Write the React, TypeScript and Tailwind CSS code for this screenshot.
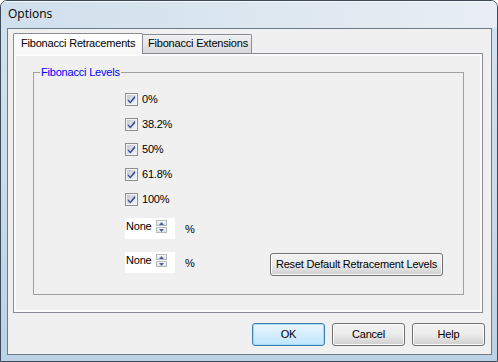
import React from 'react'

const body = { fontFamily: '"Liberation Sans", Arial, sans-serif' }

function Check() {
  return (
    <svg width="13" height="13" viewBox="0 0 13 13" className="shrink-0">
      <defs>
        <linearGradient id="cb" x1="0" y1="0" x2="1" y2="1">
          <stop offset="0" stopColor="#c4c9d1" />
          <stop offset="1" stopColor="#f4f4f4" />
        </linearGradient>
      </defs>
      <rect x="0.5" y="0.5" width="12" height="12" fill="#f4f4f4" stroke="#8f8f8f" />
      <rect x="2" y="2" width="9" height="9" fill="url(#cb)" />
      <path d="M2.8 6 L5.2 8.6 L9.8 2.8 L10.2 5 L5.3 10.6 L2.8 7.8 Z" fill="#34489a" />
    </svg>
  )
}

function Level({ label }: { label: string }) {
  return (
    <div className="flex items-start gap-[4px] h-[13px]">
      <Check />
      <span className="text-[11px] leading-[13px] text-black">{label}</span>
    </div>
  )
}

function Spinner() {
  return (
    <div className="flex items-start">
      <div className="w-[50px] h-[21px] bg-white flex items-start">
        <span className="pl-[1px] pt-[2px] text-[11px] leading-[13px] text-black">None</span>
        <div className="ml-[4px] mt-[2px] flex flex-col gap-[1px]">
          <div className="w-[11px] h-[6px] border border-[#b4b9c0] bg-gradient-to-b from-[#f7f8fa] to-[#dde2e8] flex items-center justify-center">
            <svg width="5" height="3" viewBox="0 0 5 3">
              <path d="M0 3 L2.5 0 L5 3 Z" fill="#4c6390" />
            </svg>
          </div>
          <div className="w-[11px] h-[6px] border border-[#b4b9c0] bg-gradient-to-b from-[#f7f8fa] to-[#dde2e8] flex items-center justify-center">
            <svg width="5" height="3" viewBox="0 0 5 3">
              <path d="M0 0 L5 0 L2.5 3 Z" fill="#4c6390" />
            </svg>
          </div>
        </div>
      </div>
      <span className="ml-[10px] mt-[5px] text-[11px] leading-[13px] text-black">%</span>
    </div>
  )
}

function Btn({ label, primary }: { label: string; primary?: boolean }) {
  return (
    <div
      className={
        primary
          ? 'w-[73px] h-[23px] rounded-[3px] border border-[#3c7fb1] bg-gradient-to-b from-[#eaf6fd] to-[#bee6fd] shadow-[inset_0_0_0_1px_#a6dbf6] flex items-center justify-center text-[11px] text-black'
          : 'w-[73px] h-[23px] rounded-[3px] border border-[#707070] bg-gradient-to-b from-[#f2f2f2] via-[#ebebeb] to-[#cfcfcf] shadow-[inset_0_0_0_1px_#fcfcfc] flex items-center justify-center text-[11px] text-black'
      }
    >
      {label}
    </div>
  )
}

export default function App() {
  return (
    <div
      className="w-[498px] h-[362px] rounded-t-[7px] border border-[#3c4a5a] bg-gradient-to-b from-[#d4e2ee] via-[#cadbe9] to-[#bcd2e6] flex flex-col overflow-hidden tracking-[-0.2px]"
      style={body}
    >
      <div className="h-[27px] flex items-start pl-[7px] pt-[5px] bg-gradient-to-r from-[#cfdfec] via-[#dce7f0] to-[#e8eef4] shadow-[inset_0_1px_0_#f4f8fb]">
        <span className="text-[12px] leading-[16px] tracking-normal text-black" style={{ fontFamily: '"Open Sans", "Noto Sans", sans-serif' }}>
          Options
        </span>
      </div>
      <div className="ml-[6px] mr-[5px] h-[327px] border border-[#6f7c89] bg-[#f0f0f0] flex flex-col">
        <div className="pl-[5px] pt-[4px] flex items-end h-[24px]">
          <div className="relative z-10 -mb-px h-[21px] w-[130px] border border-b-0 border-[#898c95] bg-gradient-to-b from-[#ffffff] to-[#f7f7f7] flex items-start pl-[7px] pt-[3px] text-[11px] leading-[13px] text-black rounded-t-[2px] whitespace-nowrap">
            Fibonacci Retracements
          </div>
          <div className="h-[19px] w-[109px] border border-l-0 border-b-0 border-[#898c95] bg-gradient-to-b from-[#f2f2f2] to-[#d8d8d8] flex items-start pl-[5px] pt-[2px] text-[11px] leading-[13px] text-black rounded-tr-[2px] whitespace-nowrap">
            Fibonacci Extensions
          </div>
        </div>
        <div className="ml-[5px] mr-[8px] h-[260px] border border-[#898c95] bg-[#fbfbfb] p-[2px]">
          <div className="h-full bg-[#f0f0f0] pt-[16px] pl-[17px] pr-[16px] pb-[15px]">
            <div className="relative h-full border border-[#a0a0a0]">
              <span className="absolute left-[6px] -top-[7px] px-[1px] bg-[#f0f0f0] text-[11px] leading-[13px] text-[#0000ff]">
                Fibonacci Levels
              </span>
              <div className="pl-[91px] pt-[20px] pr-[20px] flex flex-col gap-[12px]">
                <Level label="0%" />
                <Level label="38.2%" />
                <Level label="50%" />
                <Level label="61.8%" />
                <Level label="100%" />
                <Spinner />
                <div className="mt-[1px] flex items-start">
                  <Spinner />
                  <div className="ml-auto mt-[1px] h-[23px] w-[173px] rounded-[3px] border border-[#707070] bg-gradient-to-b from-[#f2f2f2] via-[#ebebeb] to-[#cfcfcf] shadow-[inset_0_0_0_1px_#fcfcfc] flex items-center justify-center text-[11px] text-black whitespace-nowrap">
                    Reset Default Retracement Levels
                  </div>
                </div>
              </div>
            </div>
          </div>
        </div>
        <div className="mt-[10px] pr-[6px] flex justify-end gap-[7px]">
          <Btn label="OK" primary />
          <Btn label="Cancel" />
          <Btn label="Help" />
        </div>
      </div>
    </div>
  )
}
